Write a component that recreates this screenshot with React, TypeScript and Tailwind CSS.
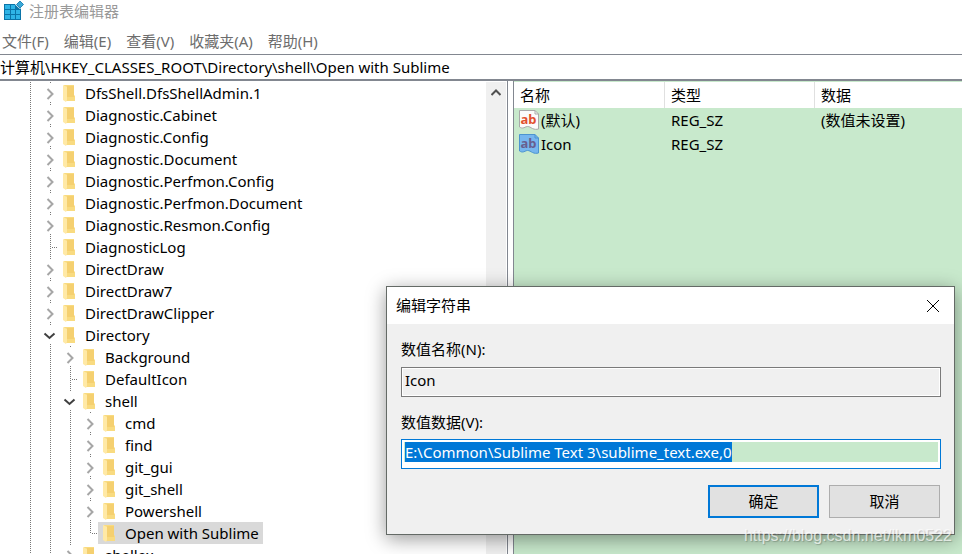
import { useEffect, useRef } from "react";

type Toggle = "closed" | "open" | "leaf" | "last";

type Key = { name: string; depth: number; toggle: Toggle; selected?: boolean };

const keys: Key[] = [
  { name: "DfsShell.DfsShellAdmin.1", depth: 0, toggle: "closed" },
  { name: "Diagnostic.Cabinet", depth: 0, toggle: "closed" },
  { name: "Diagnostic.Config", depth: 0, toggle: "closed" },
  { name: "Diagnostic.Document", depth: 0, toggle: "closed" },
  { name: "Diagnostic.Perfmon.Config", depth: 0, toggle: "closed" },
  { name: "Diagnostic.Perfmon.Document", depth: 0, toggle: "closed" },
  { name: "Diagnostic.Resmon.Config", depth: 0, toggle: "closed" },
  { name: "DiagnosticLog", depth: 0, toggle: "leaf" },
  { name: "DirectDraw", depth: 0, toggle: "closed" },
  { name: "DirectDraw7", depth: 0, toggle: "closed" },
  { name: "DirectDrawClipper", depth: 0, toggle: "closed" },
  { name: "Directory", depth: 0, toggle: "open" },
  { name: "Background", depth: 1, toggle: "closed" },
  { name: "DefaultIcon", depth: 1, toggle: "leaf" },
  { name: "shell", depth: 1, toggle: "open" },
  { name: "cmd", depth: 2, toggle: "closed" },
  { name: "find", depth: 2, toggle: "closed" },
  { name: "git_gui", depth: 2, toggle: "closed" },
  { name: "git_shell", depth: 2, toggle: "closed" },
  { name: "Powershell", depth: 2, toggle: "closed" },
  { name: "Open with Sublime", depth: 2, toggle: "last", selected: true },
  { name: "shellex", depth: 1, toggle: "closed" },
];

const menus = ["文件(F)", "编辑(E)", "查看(V)", "收藏夹(A)", "帮助(H)"];

function RegistryIcon() {
  return (
    <svg width="20" height="21" viewBox="0 0 20 21" aria-hidden="true">
      <path d="M0 4h17v16H0z" fill="#0b74a8" />
      <g fill="#2fb4e6">
        <path d="M1 5h5v4H1zM7 5h4v4H7z" />
        <path d="M1 10h5v4H1zM7 10h4v4H7zM12 10h4v4h-4z" />
        <path d="M1 15h5v4H1zM7 15h4v4H7zM12 15h4v4h-4z" />
      </g>
      <path d="M16 0l5 4.500-5 4.500-5-4.500z" fill="#fff" />
      <path d="M16 1l3.500 3.500-3.500 3.500-3.500-3.500z" fill="#3aa9d8" stroke="#0b74a8" strokeWidth="0.8" />
    </svg>
  );
}

function FolderIcon() {
  return (
    <svg width="12" height="17" viewBox="0 0 12 17" aria-hidden="true">
      <path d="M1 0h10v10l1 1v5H3z" fill="#f9db80" />
      <path d="M4 1h7v11H4z" fill="#f5d070" />
      <path d="M0 0l4 2v13l-1 2-3-2z" fill="#ffe9a6" />
    </svg>
  );
}

function StringIcon({ selected }: { selected?: boolean }) {
  const edge = selected ? "#4c94d0" : "#a9a9a9";
  return (
    <svg width="20" height="20" viewBox="0 0 20 20" className="overflow-visible" aria-hidden="true">
      <path
        d="M.5.5H16l3.500 3.500v15c-2 .5-4 .5-6-.5s-3-2-5-2-3 1.500-5 1.500c-1.500 0-2-.5-3-1z"
        fill={selected ? "#76b6ee" : "#fbfbfb"}
        stroke={edge}
      />
      <path d="M16 .5v3.500h3.500" fill="none" stroke={edge} />
      <text
        x="9.500"
        y="14"
        textAnchor="middle"
        fontSize="13"
        fontWeight="bold"
        fontFamily="Noto Sans, sans-serif"
        fill={selected ? "#685f90" : "#e2512f"}
      >
        ab
      </text>
    </svg>
  );
}

function ToggleCell({ toggle }: { toggle: Toggle }) {
  const dots = "w-px bg-[linear-gradient(#777_50%,transparent_50%)] bg-[length:1px_2px]";
  if (toggle === "leaf" || toggle === "last") {
    return (
      <span className="flex h-full w-[18px] shrink-0 items-center pl-[10px]">
        <span className={`${dots} self-start ${toggle === "last" ? "h-3" : "h-full"}`} />
        <span className="mt-px h-px flex-1 bg-[linear-gradient(90deg,transparent_50%,#777_50%)] bg-[length:2px_1px]" />
      </span>
    );
  }
  return (
    <button
      type="button"
      aria-label={toggle === "open" ? "折叠" : "展开"}
      className="flex h-full w-[18px] shrink-0 flex-col items-center"
    >
      <svg width="18" height="22" viewBox="0 0 18 22" fill="none" aria-hidden="true">
        <path d="M10 0h1v1h-1zM10 20h1v1h-1z" fill="#777" />
        {toggle === "open" ? (
          <path d="M4.500 9.500l5 4.500 5-4.500" stroke="#404040" strokeWidth="2" />
        ) : (
          <path d="M7.500 7l5 5-5 5" stroke="#a6a6a6" strokeWidth="2" />
        )}
      </svg>
    </button>
  );
}

function TreeRow({ item }: { item: Key }) {
  return (
    <li className="flex h-[22px] shrink-0 items-center pl-5">
      {Array.from({ length: item.depth + 1 }, (_, i) => (
        <span key={i} className="h-full w-5 shrink-0 pl-[10px]">
          <span className="block h-full w-px bg-[linear-gradient(#777_50%,transparent_50%)] bg-[length:1px_2px]" />
        </span>
      ))}
      <ToggleCell toggle={item.toggle} />
      <span
        className={`flex h-full items-center gap-[10px] pr-1 pl-[5px] whitespace-nowrap ${item.selected ? "bg-[#d9d9d9]" : ""}`}
      >
        <FolderIcon />
        {item.name}
      </span>
    </li>
  );
}

export default function App() {
  const dataRef = useRef<HTMLInputElement>(null);

  useEffect(() => {
    dataRef.current?.focus();
    dataRef.current?.select();
  }, []);

  return (
    <div className="relative flex h-screen flex-col overflow-hidden bg-white font-['Noto_Sans','Noto_Sans_CJK_SC',sans-serif] text-[15px] leading-[22px] text-black">
      <header className="flex h-7 shrink-0 items-start gap-[5px] pl-1 text-[#999]">
        <RegistryIcon />
        <h1>注册表编辑器</h1>
      </header>
      <nav className="flex h-[26px] shrink-0 items-center gap-[15px] pl-[2px] text-[#6d6d6d]">
        {menus.map((m) => (
          <button key={m} type="button">
            {m}
          </button>
        ))}
      </nav>
      <input
        aria-label="地址"
        readOnly
        value="计算机\HKEY_CLASSES_ROOT\Directory\shell\Open with Sublime"
        className="h-[26px] shrink-0 border-y border-[#828790] pb-[2px] outline-none"
      />

      <main className="flex min-h-0 flex-1 border-t border-[#828790]">
        <section className="flex w-[508px] shrink-0 border-r border-[#828790] pt-px">
          <ul className="flex min-w-0 flex-1 flex-col overflow-hidden">
            {keys.map((k) => (
              <TreeRow key={k.name} item={k} />
            ))}
          </ul>
          <div className="mr-px w-5 shrink-0 bg-[#f0f0f0]">
            <button type="button" aria-label="向上滚动" className="flex h-[22px] w-full items-center justify-center">
              <svg width="10" height="8" viewBox="0 0 10 8" fill="none" aria-hidden="true">
                <path d="M.5 6l4.500-4.500L9.500 6" stroke="#505050" strokeWidth="2" />
              </svg>
            </button>
          </div>
        </section>
        <section className="ml-[5px] min-w-0 flex-1 border-l border-[#828790] bg-[#c8e9cc] pt-px">
          <table className="w-full table-fixed border-separate border-spacing-0 text-left">
            <thead>
              <tr className="h-[26px] bg-white">
                <th className="w-[151px] border-r border-[#e0e0e0] p-0 pl-[6px] font-normal">名称</th>
                <th className="w-[150px] border-r border-[#e0e0e0] p-0 pl-[6px] font-normal">类型</th>
                <th className="p-0 pl-[6px] font-normal">数据</th>
              </tr>
            </thead>
            <tbody>
              <tr className="h-6">
                <td className="p-0 pl-[5px]">
                  <span className="flex items-center gap-[2px]">
                    <StringIcon />
                    (默认)
                  </span>
                </td>
                <td className="p-0 pl-[6px]">REG_SZ</td>
                <td className="p-0 pl-[6px]">(数值未设置)</td>
              </tr>
              <tr className="h-6">
                <td className="p-0 pl-[5px]">
                  <span className="flex items-center gap-[2px]">
                    <StringIcon selected />
                    Icon
                  </span>
                </td>
                <td className="p-0 pl-[6px]">REG_SZ</td>
                <td />
              </tr>
            </tbody>
          </table>
        </section>
      </main>

      <form
        role="dialog"
        aria-label="编辑字符串"
        onSubmit={(e) => e.preventDefault()}
        className="absolute top-[286px] left-[386px] w-[569px] border border-[#646a66] bg-[#f0f0f0] shadow-[0_4px_18px_rgba(0,0,0,0.4)]"
      >
        <div className="flex h-[37px] items-center justify-between bg-white pr-[14px] pl-[9px]">
          <h2 className="pb-[2px]">编辑字符串</h2>
          <button type="button" aria-label="关闭">
            <svg width="14" height="14" viewBox="0 0 14 14" aria-hidden="true">
              <path d="M1 1l12 12M13 1L1 13" stroke="#000" />
            </svg>
          </button>
        </div>
        <div className="pt-[14px] pr-[13px] pb-4 pl-[14px]">
          <label htmlFor="value-name" className="block">
            数值名称(N):
          </label>
          <div className="mt-[7px] h-[30px] border border-[#7a7a7a] bg-white p-px">
            <input
              id="value-name"
              readOnly
              value="Icon"
              className="block h-full w-full bg-[#f0f0f0] pb-1 pl-[2px] outline-none"
            />
          </div>
          <label htmlFor="value-data" className="mt-[14px] block">
            数值数据(V):
          </label>
          <div className="mt-[6px] h-[30px] border border-[#0078d7] bg-white px-[2px] pt-[2px]">
            <input
              id="value-data"
              ref={dataRef}
              defaultValue="E:\Common\Sublime Text 3\sublime_text.exe,0"
              className="block h-5 w-full bg-[#c8e9cc] pl-px leading-5 outline-none selection:bg-[#0078d7] selection:text-white"
            />
          </div>
          <div className="mt-4 flex justify-end gap-[10px] pr-px">
            <button type="submit" className="h-[33px] w-[111px] border-2 border-[#0078d7] bg-[#e1e1e1] pb-[2px]">
              确定
            </button>
            <button type="button" className="h-[33px] w-[111px] border border-[#adadad] bg-[#e1e1e1] pb-[2px]">
              取消
            </button>
          </div>
        </div>
      </form>

      <span className="pointer-events-none absolute right-[10px] bottom-2 font-['Liberation_Sans',sans-serif] text-base leading-5 text-white/70 [text-shadow:1px_1px_1px_rgba(0,0,0,0.2)]">
        https://blog.csdn.net/lkm0522
      </span>
    </div>
  );
}
